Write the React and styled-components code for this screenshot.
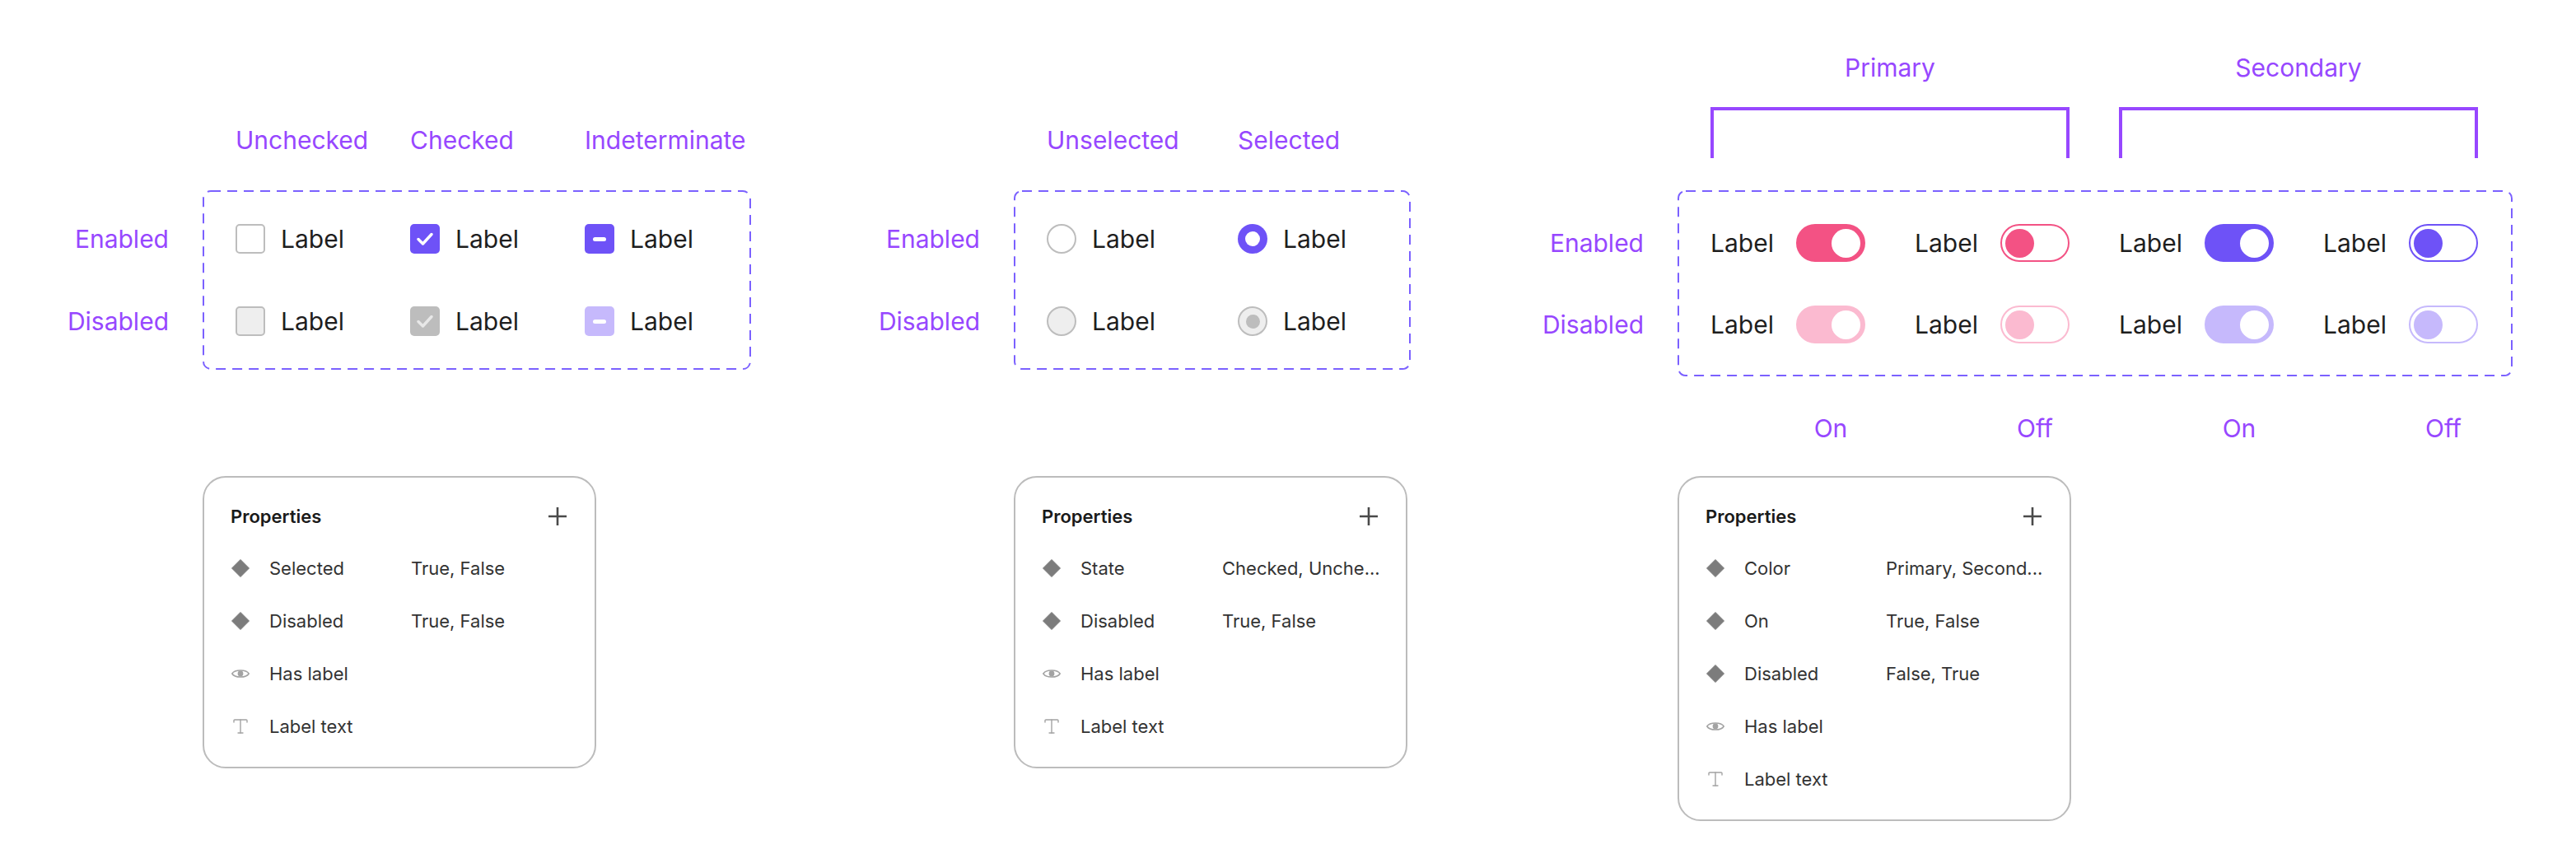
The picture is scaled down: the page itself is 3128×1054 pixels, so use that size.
import React from 'react'
import styled, { createGlobalStyle } from 'styled-components'
import { Type } from 'lucide-react'

const PURPLE_TEXT = '#9747FF'
const FRAME = '#7B61FF'
const ACCENT = '#6E52F7'
const ACCENT_LIGHT = '#C6B9FC'
const PINK = '#F35284'
const PINK_LIGHT = '#FBBAD0'
const GREY = '#BDBDBD'

const GlobalStyle = createGlobalStyle`
  * { box-sizing: border-box; }
  body {
    margin: 0;
    background: #fff;
    font-family: Inter, "Noto Sans", sans-serif;
  }
`

const Page = styled.div`
  display: flex;
  align-items: flex-start;
  gap: 148px;
  padding-left: 75px;
  width: 3128px;
  height: 1054px;
  overflow: hidden;
`

const Section = styled.section`
  display: grid;
  grid-template-columns: 130px auto;
  grid-template-rows: 231px 226px 121px auto;
  column-gap: 41px;
  margin-left: ${p => p.$shift || 0}px;
`

const Top = styled.div`
  grid-column: 2;
  grid-row: 1;
  display: flex;
  flex-direction: column;
  justify-content: flex-end;
  padding-bottom: ${p => p.$pb}px;
`

const Columns = styled.div`
  display: grid;
  grid-template-columns: ${p => p.$cols};
  column-gap: ${p => p.$gap || 0}px;
  padding-left: 40px;
`

const Heading = styled.span`
  font-size: 30px;
  line-height: 36px;
  color: ${PURPLE_TEXT};
  text-align: ${p => p.$align || 'left'};
`

const Bracket = styled.div`
  height: 62px;
  margin-top: 30px;
  border: 4px solid ${PURPLE_TEXT};
  border-bottom: none;
`

const RowLabels = styled.div`
  grid-column: 1;
  grid-row: 2;
  display: flex;
  flex-direction: column;
  align-items: flex-end;
  padding-top: 41px;
  gap: ${p => p.$gap}px;
`

const RowLabel = styled.span`
  height: ${p => p.$h}px;
  line-height: ${p => p.$h}px;
  font-size: 30px;
  color: ${PURPLE_TEXT};
`

const Frame = styled.div`
  position: relative;
  grid-column: 2;
  grid-row: 2;
  align-self: start;
  width: ${p => p.$w}px;
  padding: 41px 40px ${p => p.$pb + 2}px 40px;
  display: grid;
  grid-template-columns: ${p => p.$cols};
  column-gap: ${p => p.$gap || 0}px;
  row-gap: ${p => p.$rowGap}px;
`

const Outline = styled.svg`
  position: absolute;
  inset: 0;
  width: 100%;
  height: 100%;
  overflow: visible;
  pointer-events: none;

  rect {
    x: 1px;
    y: 1px;
    width: calc(100% - 2px);
    height: calc(100% - 2px);
    rx: 9px;
    fill: none;
    stroke: ${FRAME};
    stroke-width: 2px;
    stroke-dasharray: 12 8;
  }
`

const Option = styled.div`
  display: flex;
  align-items: center;
  gap: 19px;
  height: 36px;
`

const ToggleOption = styled.div`
  display: flex;
  align-items: center;
  justify-content: space-between;
  height: 46px;
`

const OptionLabel = styled.span`
  font-size: 30px;
  line-height: 36px;
  color: #1e1e1e;
`

const Box = styled.span`
  flex: none;
  width: 36px;
  height: 36px;
  border-radius: 5px;
  display: flex;
  align-items: center;
  justify-content: center;
  background: ${p => p.$bg};
  border: ${p => (p.$outlined ? `2px solid ${GREY}` : 'none')};
`

const Dash = styled.span`
  width: 16px;
  height: 5px;
  border-radius: 3px;
  background: #fff;
`

const Radio = styled.span`
  flex: none;
  width: 36px;
  height: 36px;
  border-radius: 50%;
  display: flex;
  align-items: center;
  justify-content: center;
  background: ${p => p.$bg};
  border: ${p => (p.$outlined ? `2px solid ${GREY}` : 'none')};
`

const Dot = styled.span`
  width: ${p => p.$size}px;
  height: ${p => p.$size}px;
  border-radius: 50%;
  background: ${p => p.$color};
`

const Track = styled.span`
  flex: none;
  width: 84px;
  height: 46px;
  border-radius: 23px;
  padding: 0 4px;
  display: flex;
  align-items: center;
  justify-content: ${p => (p.$on ? 'flex-end' : 'flex-start')};
  background: ${p => (p.$on ? p.$color : '#fff')};
  border: 2px solid ${p => p.$color};
`

const Knob = styled.span`
  width: 35px;
  height: 35px;
  border-radius: 50%;
  background: ${p => (p.$on ? '#fff' : p.$color)};
`

const Footer = styled(Columns)`
  grid-column: 2;
  grid-row: 3;
  padding-top: 45px;
  align-self: start;
`

const FooterLabel = styled(Heading)`
  justify-self: end;
  width: 84px;
  text-align: center;
`

const Panel = styled.div`
  grid-column: 2;
  grid-row: 4;
  width: 478px;
  border: 2px solid #bcbcbc;
  border-radius: 28px;
  padding: 27px 33px 17px 32px;
`

const PanelHead = styled.div`
  display: flex;
  align-items: center;
  justify-content: space-between;
  height: 40px;
  margin-bottom: 11px;
`

const PanelTitle = styled.span`
  font-size: 22px;
  font-weight: 600;
  color: #1a1a1a;
`

const PropRow = styled.div`
  display: grid;
  grid-template-columns: 24px 149px 1fr;
  column-gap: 23px;
  align-items: center;
  height: 64px;
  font-size: 22px;
  color: #333;
`

const PropText = styled.span`
  white-space: nowrap;
`

const IconSlot = styled.span`
  display: flex;
  align-items: center;
  justify-content: center;
  width: 24px;
  height: 24px;
`

const Check = ({ color }) => (
  <svg width="36" height="36" viewBox="0 0 36 36">
    <polyline points="10,18.5 15.5,24 26,12.5" fill="none" stroke={color} strokeWidth="3.4" strokeLinecap="round" strokeLinejoin="round" />
  </svg>
)

const Checkbox = ({ state, disabled }) => {
  if (state === 'unchecked') return <Box $outlined $bg={disabled ? '#EEEEEE' : '#fff'} />
  if (state === 'checked')
    return (
      <Box $bg={disabled ? GREY : ACCENT}>
        <Check color={disabled ? '#E8E8E8' : '#fff'} />
      </Box>
    )
  return (
    <Box $bg={disabled ? ACCENT_LIGHT : ACCENT}>
      <Dash />
    </Box>
  )
}

const RadioControl = ({ selected, disabled }) => {
  if (disabled)
    return (
      <Radio $outlined $bg="#EEEEEE">
        {selected && <Dot $size={17} $color={GREY} />}
      </Radio>
    )
  if (selected)
    return (
      <Radio $bg={ACCENT}>
        <Dot $size={18} $color="#fff" />
      </Radio>
    )
  return <Radio $outlined $bg="#fff" />
}

const Diamond = () => (
  <svg width="24" height="24" viewBox="0 0 24 24">
    <path d="M12 1.5 L22.5 12 L12 22.5 L1.5 12 Z" fill="#7c7c7c" stroke="#7c7c7c" strokeWidth="1" strokeLinejoin="round" />
  </svg>
)

const Eye = () => (
  <svg width="24" height="24" viewBox="0 0 24 24">
    <path d="M1.8 12 C5 6.6 19 6.6 22.2 12 C19 17.4 5 17.4 1.8 12 Z" fill="none" stroke="#a3a3a3" strokeWidth="1.5" />
    <circle cx="12" cy="12" r="3.4" fill="#a3a3a3" />
  </svg>
)

const PlusIcon = () => (
  <svg width="24" height="24" viewBox="0 0 24 24">
    <path d="M12 1v22M1 12h22" stroke="#4a4a4a" strokeWidth="2.6" />
  </svg>
)

const propIcon = {
  variant: <Diamond />,
  bool: <Eye />,
  text: <Type size={24} strokeWidth={1.4} color="#a3a3a3" />,
}

const PropertiesPanel = ({ rows }) => (
  <Panel>
    <PanelHead>
      <PanelTitle>Properties</PanelTitle>
      <PlusIcon />
    </PanelHead>
    {rows.map(([kind, name, value]) => (
      <PropRow key={name}>
        <IconSlot>{propIcon[kind]}</IconSlot>
        <PropText>{name}</PropText>
        <PropText>{value}</PropText>
      </PropRow>
    ))}
  </Panel>
)

const DashedFrame = ({ children, ...props }) => (
  <Frame {...props}>
    <Outline>
      <rect />
    </Outline>
    {children}
  </Frame>
)

const commonTail = [
  ['bool', 'Has label', ''],
  ['text', 'Label text', ''],
]

const CheckboxSection = () => {
  const cols = '212px 212px 1fr'
  const states = ['unchecked', 'checked', 'indeterminate']
  return (
    <Section>
      <Top $pb={43}>
        <Columns $cols={cols}>
          <Heading>Unchecked</Heading>
          <Heading>Checked</Heading>
          <Heading>Indeterminate</Heading>
        </Columns>
      </Top>
      <RowLabels $gap={64}>
        <RowLabel $h={36}>Enabled</RowLabel>
        <RowLabel $h={36}>Disabled</RowLabel>
      </RowLabels>
      <DashedFrame $w={666} $cols={cols} $rowGap={64} $pb={39}>
        {[false, true].map(disabled =>
          states.map(s => (
            <Option key={s + disabled}>
              <Checkbox state={s} disabled={disabled} />
              <OptionLabel>Label</OptionLabel>
            </Option>
          ))
        )}
      </DashedFrame>
      <PropertiesPanel
        rows={[
          ['variant', 'Selected', 'True, False'],
          ['variant', 'Disabled', 'True, False'],
          ...commonTail,
        ]}
      />
    </Section>
  )
}

const RadioSection = () => {
  const cols = '232px 1fr'
  return (
    <Section>
      <Top $pb={43}>
        <Columns $cols={cols}>
          <Heading>Unselected</Heading>
          <Heading>Selected</Heading>
        </Columns>
      </Top>
      <RowLabels $gap={64}>
        <RowLabel $h={36}>Enabled</RowLabel>
        <RowLabel $h={36}>Disabled</RowLabel>
      </RowLabels>
      <DashedFrame $w={482} $cols={cols} $rowGap={64} $pb={39}>
        {[false, true].map(disabled =>
          [false, true].map(selected => (
            <Option key={`${selected}${disabled}`}>
              <RadioControl selected={selected} disabled={disabled} />
              <OptionLabel>Label</OptionLabel>
            </Option>
          ))
        )}
      </DashedFrame>
      <PropertiesPanel
        rows={[
          ['variant', 'State', 'Checked, Unche...'],
          ['variant', 'Disabled', 'True, False'],
          ...commonTail,
        ]}
      />
    </Section>
  )
}

const toggles = [
  { color: PINK, light: PINK_LIGHT, on: true },
  { color: PINK, light: PINK_LIGHT, on: false },
  { color: ACCENT, light: ACCENT_LIGHT, on: true },
  { color: ACCENT, light: ACCENT_LIGHT, on: false },
]

const ToggleSection = () => {
  const cols = 'repeat(4, 188px)'
  return (
    <Section $shift={5}>
      <Top $pb={39}>
        <Columns $cols="436px 436px" $gap={60}>
          <Heading $align="center">Primary</Heading>
          <Heading $align="center">Secondary</Heading>
        </Columns>
        <Columns $cols="436px 436px" $gap={60}>
          <Bracket />
          <Bracket />
        </Columns>
      </Top>
      <RowLabels $gap={53}>
        <RowLabel $h={46}>Enabled</RowLabel>
        <RowLabel $h={46}>Disabled</RowLabel>
      </RowLabels>
      <DashedFrame $w={1014} $cols={cols} $gap={60} $rowGap={53} $pb={38}>
        {[false, true].map(disabled =>
          toggles.map((t, i) => (
            <ToggleOption key={`${i}${disabled}`}>
              <OptionLabel>Label</OptionLabel>
              <Track $on={t.on} $color={disabled ? t.light : t.color}>
                <Knob $on={t.on} $color={disabled ? t.light : t.color} />
              </Track>
            </ToggleOption>
          ))
        )}
      </DashedFrame>
      <Footer $cols={cols} $gap={60}>
        <FooterLabel>On</FooterLabel>
        <FooterLabel>Off</FooterLabel>
        <FooterLabel>On</FooterLabel>
        <FooterLabel>Off</FooterLabel>
      </Footer>
      <PropertiesPanel
        rows={[
          ['variant', 'Color', 'Primary, Second...'],
          ['variant', 'On', 'True, False'],
          ['variant', 'Disabled', 'False, True'],
          ...commonTail,
        ]}
      />
    </Section>
  )
}

export default function App() {
  return (
    <>
      <GlobalStyle />
      <Page>
        <CheckboxSection />
        <RadioSection />
        <ToggleSection />
      </Page>
    </>
  )
}
